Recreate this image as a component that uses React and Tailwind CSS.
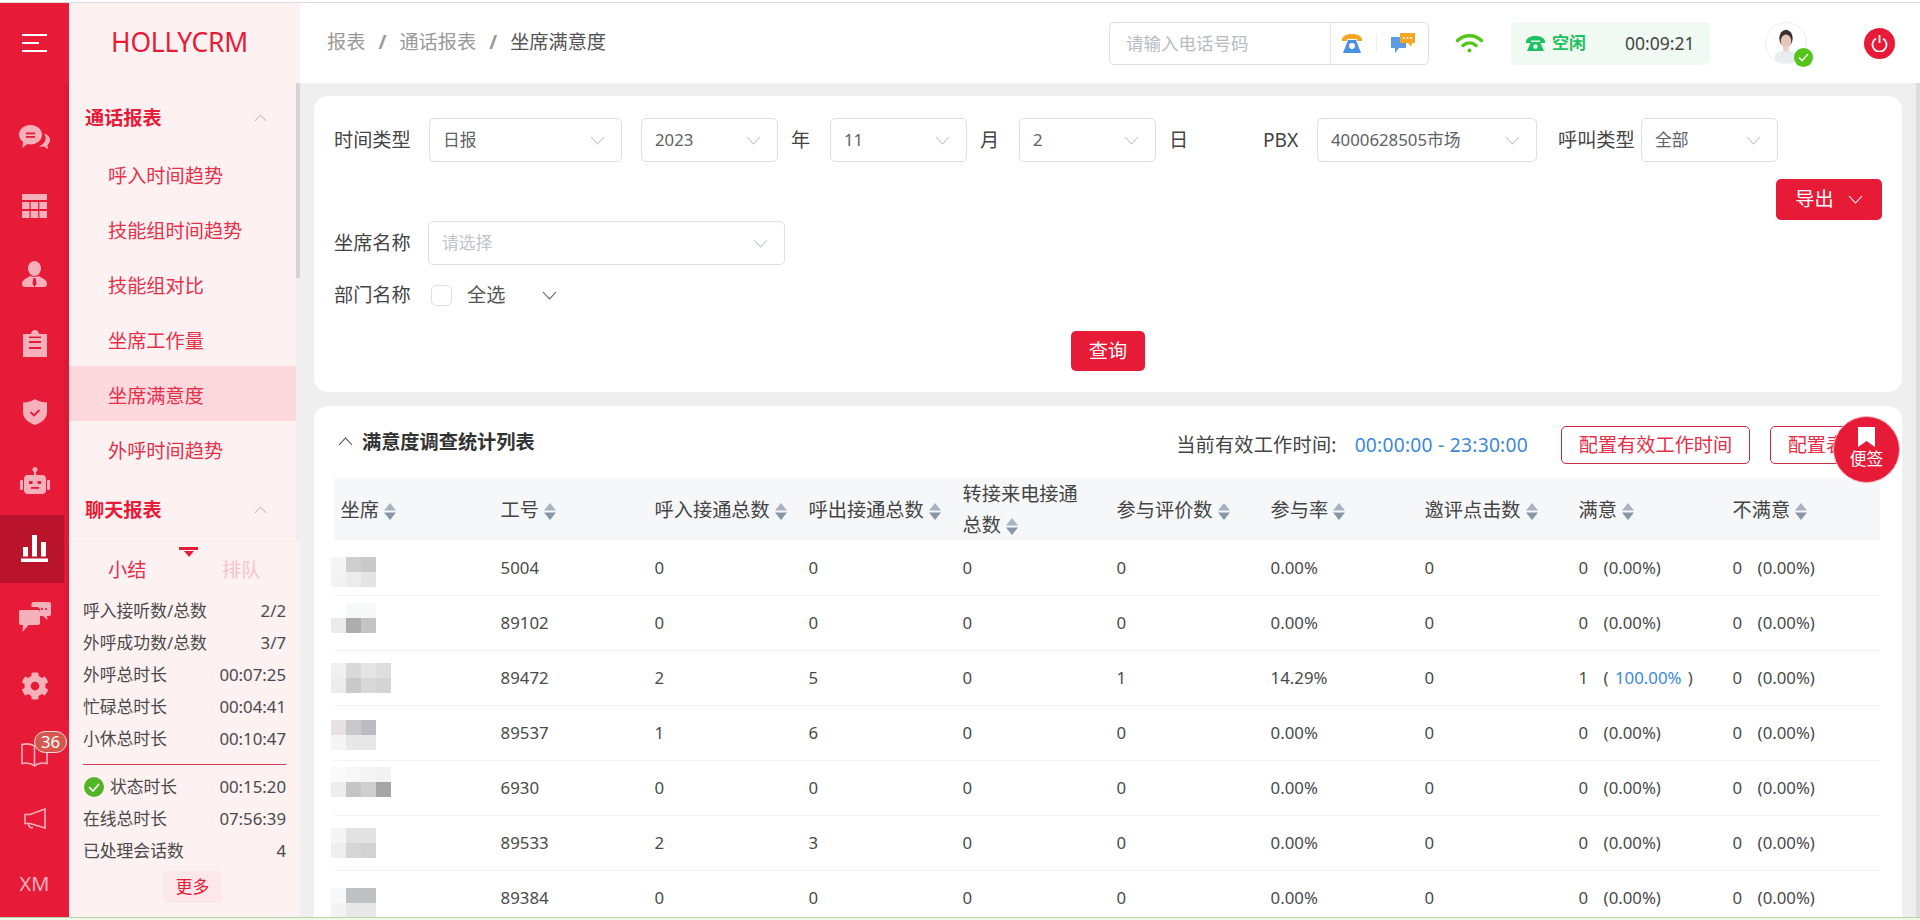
import React from "react";
import { FaCog } from "react-icons/fa";

const railColor = "#f6b0ba";

function Chevron({ className = "", color = "#c0c4cc", dir = "down" }) {
  return (
    <svg viewBox="0 0 15 9" className={className} fill="none">
      <polyline
        points={dir === "down" ? "1,1 7.5,8 14,1" : "1,8 7.5,1 14,8"}
        stroke={color}
        strokeWidth="1.1"
      />
    </svg>
  );
}

function Caret() {
  return (
    <svg viewBox="0 0 12 17" className="inline-block w-[12px] h-[17px] ml-[5px] align-[-3px]">
      <path d="M6 0L12 7.5H0z" fill="#a9b3bf" />
      <path d="M6 17L0 9.5H12z" fill="#8797a8" />
    </svg>
  );
}

const IconChat = () => (
  <svg viewBox="0 0 31 25" className="w-[31px] h-[25px]" fill={railColor}>
    <path d="M24.5 8.5c3.8.8 6.5 3.4 6.5 6.6 0 2-1 3.700-2.600 4.900l.9 4.300-4.500-2.700c-1.500.2-3.200.1-4.600-.4 3.900-1.500 6.500-4.800 6.500-8.600 0-1.500-.8-2.900-2.200-4.100z" />
    <path d="M11.500 0C17.800 0 23 4.300 23 9.700S17.800 19.400 11.500 19.400c-1 0-2-.1-3-.3L3.400 23l.7-6C1.600 15.200 0 12.600 0 9.700 0 4.300 5.200 0 11.500 0z" />
    <rect x="7" y="7.500" width="9" height="1.800" fill="#e71a37" />
    <rect x="7" y="11" width="9" height="1.800" fill="#e71a37" />
  </svg>
);
const IconTable = () => (
  <svg viewBox="0 0 25 24" className="w-[25px] h-[24px]" fill={railColor}>
    <rect width="25" height="6" />
    <rect y="8" width="7.500" height="7" /><rect x="8.700" y="8" width="7.500" height="7" /><rect x="17.400" y="8" width="7.600" height="7" />
    <rect y="17" width="7.500" height="7" /><rect x="8.700" y="17" width="7.500" height="7" /><rect x="17.400" y="17" width="7.600" height="7" />
  </svg>
);
const IconPerson = () => (
  <svg viewBox="0 0 25 26" className="w-[25px] h-[26px]" fill={railColor}>
    <ellipse cx="12.500" cy="7.500" rx="6.500" ry="7.500" />
    <path d="M8 15c1.200 1 7.800 1 9 0 3.500 2.500 8 3.500 8 8 0 2-1.500 3-3 3H3c-1.500 0-3-1-3-3 0-4.500 4.500-5.500 8-8z" />
    <path d="M11.300 17h2.400l.8 6-2 3-2-3z" fill="#e71a37" />
  </svg>
);
const IconClip = () => (
  <svg viewBox="0 0 24 27" className="w-[24px] h-[27px]" fill={railColor}>
    <path d="M0 4h8c0-2.300 1.800-4 4-4s4 1.700 4 4h8v23H0z" />
    <rect x="6" y="11" width="12" height="2" fill="#e71a37" />
    <rect x="6" y="17" width="12" height="2" fill="#e71a37" />
    <rect x="6" y="6.500" width="12" height="1.500" fill="#e71a37" />
  </svg>
);
const IconShield = () => (
  <svg viewBox="0 0 24 26" className="w-[24px] h-[26px]" fill={railColor}>
    <path d="M12 0c3 2.200 7.500 3.300 12 3.500V13c0 6.300-5 10.500-12 13C5 23.500 0 19.300 0 13V3.500C4.500 3.300 9 2.200 12 0z" />
    <polyline points="7.500,13 11,16.500 16.500,11" fill="none" stroke="#e71a37" strokeWidth="1.800" />
  </svg>
);
const IconRobot = () => (
  <svg viewBox="0 0 30 27" className="w-[30px] h-[27px]" fill={railColor}>
    <circle cx="15" cy="2.500" r="2.500" />
    <rect x="14" y="3" width="2" height="5" />
    <rect x="4" y="8" width="22" height="19" rx="4" />
    <rect y="13" width="3" height="10" rx="1" />
    <rect x="27" y="13" width="3" height="10" rx="1" />
    <rect x="9" y="14" width="3.500" height="3" fill="#e71a37" />
    <rect x="17.500" y="14" width="3.500" height="3" fill="#e71a37" />
    <rect x="11" y="20" width="8" height="1.800" fill="#e71a37" />
  </svg>
);
const IconBars = () => (
  <svg viewBox="0 0 27 27" className="w-[27px] h-[27px]" fill="#fff">
    <rect x="2" y="12" width="5" height="9.500" />
    <rect x="11" y="0" width="5" height="21.500" />
    <rect x="20" y="7" width="5" height="14.500" />
    <rect y="23.500" width="27" height="3.500" />
  </svg>
);
const IconChat2 = () => (
  <svg viewBox="0 0 32 31" className="w-[32px] h-[31px]" fill={railColor}>
    <path d="M2 8h17c1.100 0 2 .9 2 2v11c0 1.100-.9 2-2 2H9.500L3.500 30l.5-7H2c-1.100 0-2-.9-2-2V10c0-1.100.9-2 2-2z" />
    <path d="M14 0h16c1.100 0 2 .9 2 2v10c0 1.100-.9 2-2 2h-2l.5 4-4.500-4h-3V8c0-1.600-1.400-3-3-3h-5.500V2c0-1.100.9-2 2-2z" />
    <circle cx="19" cy="7" r="1.100" fill="#e71a37" /><circle cx="23" cy="7" r="1.100" fill="#e71a37" /><circle cx="27" cy="7" r="1.100" fill="#e71a37" />
  </svg>
);
const IconBook = () => (
  <svg viewBox="0 0 27 25" className="w-[27px] h-[25px]" fill="none" stroke={railColor} strokeWidth="1.600">
    <path d="M13.500 4C10 2 5 1.500 1 2.500v19c4-1 9-.5 12.500 2.500 3.500-3 8.500-3.500 12.500-2.500v-19c-4-1-9-.5-12.500 1.500z" />
    <path d="M13.500 4v20" />
  </svg>
);
const IconMega = () => (
  <svg viewBox="0 0 22 21" className="w-[22px] h-[21px]" fill="none" stroke={railColor} strokeWidth="1.600">
    <path d="M21 1v19L6 15.500H1v-9h5z" />
    <path d="M4.500 16c0 2.500 1.500 4 4.500 3.500" />
  </svg>
);

function RailItem({ children, active, h = "h-[68.6px]" }) {
  return (
    <div className={`${h} shrink-0 flex items-center justify-center ${active ? "w-[64px] bg-[#b9142c] pl-[5px]" : "w-[69px]"}`}>
      {children}
    </div>
  );
}

function Rail() {
  return (
    <div className="relative w-[69px] shrink-0 bg-[#e71a37] flex flex-col">
      <div className="h-[80px] shrink-0 flex flex-col justify-center gap-[6px] pl-[22px] pb-[1px]">
        <div className="w-[25px] h-[2px] bg-white" />
        <div className="w-[17px] h-[2px] bg-white" />
        <div className="w-[25px] h-[2px] bg-white" />
      </div>
      <div className="absolute right-0 top-[80px] w-[5px] h-[637px] bg-[#dc1a35]" />
      <div className="relative flex flex-col pt-[20px]">
        <RailItem><IconChat /></RailItem>
        <RailItem><IconTable /></RailItem>
        <RailItem><IconPerson /></RailItem>
        <RailItem><IconClip /></RailItem>
        <RailItem><IconShield /></RailItem>
        <RailItem><IconRobot /></RailItem>
        <RailItem active><IconBars /></RailItem>
        <RailItem><IconChat2 /></RailItem>
        <RailItem><FaCog className="w-[28px] h-[28px] text-[#f6b0ba]" /></RailItem>
        <RailItem>
          <div className="relative">
            <IconBook />
            <span className="absolute left-[13px] -top-[11px] w-[33px] h-[22px] rounded-full border border-[#f8d8d8] bg-[#d5584f] text-white text-[16.8px] leading-[20px] text-center">36</span>
          </div>
        </RailItem>
        <RailItem h="h-[60px]"><IconMega /></RailItem>
        <RailItem h="h-[70px]"><span className="text-[20px] text-[#f6b0ba]">XM</span></RailItem>
      </div>
    </div>
  );
}

const menu1 = ["呼入时间趋势", "技能组时间趋势", "技能组对比", "坐席工作量", "坐席满意度", "外呼时间趋势"];
const stats1 = [
  ["呼入接听数/总数", "2/2"],
  ["外呼成功数/总数", "3/7"],
  ["外呼总时长", "00:07:25"],
  ["忙碌总时长", "00:04:41"],
  ["小休总时长", "00:10:47"],
];

function MenuHeading({ children, h }) {
  return (
    <div className={`${h} flex items-center justify-between pl-[16px] pr-[29px] pt-[4px] text-[19.2px] font-bold text-[#e71a37]`}>
      <span>{children}</span>
      <Chevron dir="up" color="#c9a0a6" className="w-[13px] h-[8px]" />
    </div>
  );
}

function StatRow({ label, value, check }) {
  return (
    <div className="h-[32px] flex items-center justify-between text-[16.8px] text-[#4a4a4a]">
      <span className="flex items-center">
        {check && (
          <svg viewBox="0 0 20 20" className="w-[20px] h-[20px] mr-[6px] ml-[1px]">
            <circle cx="10" cy="10" r="10" fill="#52b528" />
            <polyline points="5,10 9,14 15,7" fill="none" stroke="#fff" strokeWidth="1.600" />
          </svg>
        )}
        {label}
      </span>
      <span>{value}</span>
    </div>
  );
}

function Sidebar() {
  return (
    <div className="w-[231px] shrink-0 bg-[#fdf1f2] flex flex-col">
      <div className="h-[80px] shrink-0 flex items-center justify-center pr-[10px] text-[26.4px] text-[#e71a37] tracking-[-0.2px]">
        HOLLYCRM
      </div>
      <div className="h-[457px] shrink-0 flex overflow-hidden">
        <div className="w-[227px] pt-[3px]">
          <MenuHeading h="h-[60px]">通话报表</MenuHeading>
          {menu1.map((m, i) => (
            <div
              key={m}
              className={`h-[55px] flex items-center pl-[39px] pt-[6px] text-[19.2px] text-[#e5304a] ${i === 4 ? "bg-[#fdd9de]" : ""}`}
            >
              {m}
            </div>
          ))}
          <MenuHeading h="h-[64px]">聊天报表</MenuHeading>
        </div>
        <div className="w-[4px] bg-[#eeeeee]">
          <div className="h-[195px] bg-[#d9d1d3]" />
        </div>
      </div>
      <div className="flex-1 border-t border-[#f6e9ea] flex flex-col">
        <div className="flex flex-col items-center pt-[6px] pl-[8px]">
          <div className="w-[19px] h-[3px] bg-[#e71a37]" />
          <div className="mt-[1px] w-0 h-0 border-l-[5px] border-r-[5px] border-t-[6px] border-l-transparent border-r-transparent border-t-[#e71a37]" />
        </div>
        <div className="flex h-[36px] items-center pl-[39px] text-[19.2px] -mt-[5px]">
          <span className="text-[#e5304a] w-[114px]">小结</span>
          <span className="text-[#f6c3cb]">排队</span>
        </div>
        <div className="pl-[14px] pr-[14px] pt-[7px]">
          {stats1.map(([a, b]) => <StatRow key={a} label={a} value={b} />)}
          <div className="h-px bg-[#d63a55] mt-[9px] mb-[6px]" />
          <StatRow label="状态时长" value="00:15:20" check />
          <StatRow label="在线总时长" value="07:56:39" />
          <StatRow label="已处理会话数" value="4" />
          <div className="flex justify-center mt-[4px] pl-[16px]">
            <div className="w-[59px] h-[32px] rounded-[5px] bg-[#fce7ea] text-[#e71a37] text-[16.8px] flex items-center justify-center">更多</div>
          </div>
        </div>
      </div>
    </div>
  );
}

function TopBar() {
  return (
    <div className="h-[80px] shrink-0 bg-white flex items-center pl-[27px] pr-[25px]">
      <div className="flex items-center text-[19.2px] text-[#999999] -mt-[2px]">
        <span>报表</span>
        <span className="w-[34px] text-center font-bold">/</span>
        <span>通话报表</span>
        <span className="w-[34px] text-center font-bold">/</span>
        <span className="text-[#555555]">坐席满意度</span>
      </div>
      <div className="ml-auto flex items-center">
        <div className="w-[320px] h-[43px] rounded-[5px] border border-[#dcdfe6] flex items-center">
          <div className="w-[220px] pl-[16px] text-[17.5px] text-[#b8bbc2]">请输入电话号码</div>
          <div className="flex-1 h-full border-l border-[#e6e6e6] flex items-center pl-[10px]">
            <svg viewBox="0 0 22 20" className="w-[22px] h-[20px]">
              <path d="M1 6c1-3.500 5-5 10-5s9 1.500 10 5v2h-5V6H6v2H1z" fill="#f6a623" />
              <path d="M7 7h8l5 13H2z" fill="#4a90e2" />
              <circle cx="11" cy="13" r="3" fill="#fff" />
            </svg>
            <div className="w-px h-[18px] bg-[#eeeeee] mx-[13px]" />
            <svg viewBox="0 0 25 20" className="w-[25px] h-[20px]">
              <path d="M1 4h15v11H9l-4 5v-5H1z" fill="#5b9be6" />
              <path d="M10 0h15v10h-3l-1 4-3-4H10z" fill="#f6a623" />
              <circle cx="14" cy="5" r="1" fill="#fff" /><circle cx="17.500" cy="5" r="1" fill="#fff" /><circle cx="21" cy="5" r="1" fill="#fff" />
            </svg>
          </div>
        </div>
        <svg viewBox="0 0 29 20" className="w-[29px] h-[20px] ml-[26px]" fill="none" stroke="#52c41a" strokeWidth="3.500" strokeLinecap="round">
          <path d="M2.500 7.500c7-6.500 17-6.500 24 0" />
          <path d="M8 12.500c4-3.500 9-3.500 13 0" />
          <circle cx="14.500" cy="17.500" r="2" fill="#52c41a" stroke="none" />
        </svg>
        <div className="w-[199px] h-[43px] ml-[27px] rounded-[5px] bg-[#f0faf2] flex items-center pl-[15px]">
          <svg viewBox="0 0 19 15" className="w-[19px] h-[15px]">
            <path d="M0 5c1-3.500 4.500-5 9.500-5s8.500 1.500 9.500 5v2h-5V4.500H5V7H0z" fill="#1ec15f" />
            <path d="M5 6h9l4 9H1z" fill="#1ec15f" />
            <circle cx="9.500" cy="10.500" r="2.200" fill="#f0faf2" />
          </svg>
          <span className="ml-[7px] text-[17px] font-bold text-[#1ec15f] w-[73px]">空闲</span>
          <span className="text-[17.5px] text-[#444444]">00:09:21</span>
        </div>
        <div className="relative w-[42px] h-[42px] ml-[55px] rounded-full border border-[#eeeeee] bg-white">
          <svg viewBox="0 0 42 42" className="w-full h-full">
            <ellipse cx="21" cy="36" rx="12" ry="7" fill="#e6ecf2" />
            <ellipse cx="21" cy="16" rx="7" ry="9" fill="#3a3030" />
            <ellipse cx="21" cy="19" rx="5.500" ry="7" fill="#e8c4bb" />
            <rect x="18" y="24" width="6" height="6" fill="#ecd0c8" />
          </svg>
          <div className="absolute -right-[7px] -bottom-[4px] w-[19px] h-[19px] rounded-full bg-[#52c41a] flex items-center justify-center">
            <svg viewBox="0 0 12 10" className="w-[11px] h-[9px]"><polyline points="1,5 4.500,8.500 11,1" fill="none" stroke="#fff" strokeWidth="1.600" /></svg>
          </div>
        </div>
        <div className="w-[31px] h-[31px] ml-[57px] rounded-full bg-[#e71a37] flex items-center justify-center">
          <svg viewBox="0 0 17 18" className="w-[17px] h-[18px]" fill="none" stroke="#fff" strokeWidth="1.800">
            <path d="M5 4.500a7 7 0 1 0 7 0" />
            <path d="M8.500 1v8" />
          </svg>
        </div>
      </div>
    </div>
  );
}

function Select({ w, value, placeholder, h = "h-[44px]" }) {
  return (
    <div className={`${w} ${h} shrink-0 rounded-[5px] border border-[#dcdfe6] flex items-center justify-between pl-[13px] pr-[16px] text-[16.8px]`}>
      <span className={placeholder ? "text-[#c0c4cc]" : "text-[#606266]"}>{value}</span>
      <Chevron className="w-[15px] h-[9px]" />
    </div>
  );
}

const labelCls = "w-[77px] shrink-0 text-[19.2px] text-[#444444]";

function FilterCard() {
  return (
    <div className="h-[296px] rounded-[14px] bg-white pl-[20px] pr-[20px] pt-[22px] mb-[14px]">
      <div className="flex items-center h-[44px]">
        <span className={labelCls}>时间类型</span>
        <div className="ml-[18px]"><Select w="w-[193px]" value="日报" /></div>
        <div className="ml-[19px]"><Select w="w-[137px]" value="2023" /></div>
        <span className="ml-[13px] w-[20px] text-[19.2px] text-[#444444]">年</span>
        <div className="ml-[19px]"><Select w="w-[137px]" value="11" /></div>
        <span className="ml-[13px] w-[20px] text-[19.2px] text-[#444444]">月</span>
        <div className="ml-[19px]"><Select w="w-[137px]" value="2" /></div>
        <span className="ml-[13px] w-[20px] text-[19.2px] text-[#444444]">日</span>
        <span className="ml-[74px] w-[36px] text-[19.2px] text-[#444444]">PBX</span>
        <div className="ml-[18px]"><Select w="w-[220px]" value="4000628505市场" /></div>
        <span className="ml-[21px] w-[77px] shrink-0 text-[19.2px] text-[#444444]">呼叫类型</span>
        <div className="ml-[6px]"><Select w="w-[137px]" value="全部" /></div>
      </div>
      <div className="flex justify-end mt-[17px]">
        <div className="w-[106px] h-[41px] rounded-[5px] bg-[#e71a37] text-white text-[19.2px] flex items-center justify-center gap-[14px]">
          <span>导出</span>
          <Chevron color="#ffffff" className="w-[15px] h-[9px]" />
        </div>
      </div>
      <div className="flex items-center mt-px">
        <span className={labelCls}>坐席名称</span>
        <div className="ml-[17px]"><Select w="w-[357px]" value="请选择" placeholder /></div>
      </div>
      <div className="flex items-center mt-[20px] h-[21px]">
        <span className={labelCls}>部门名称</span>
        <span className="ml-[20px] w-[21px] h-[21px] rounded-[5px] border border-[#dcdfe6] bg-white" />
        <span className="ml-[15px] text-[19.2px] text-[#555555]">全选</span>
        <Chevron color="#555555" className="ml-[36px] w-[17px] h-[9px]" />
      </div>
      <div className="flex justify-center mt-[25px]">
        <div className="w-[74px] h-[40px] rounded-[5px] bg-[#e71a37] text-white text-[19.2px] flex items-center justify-center">查询</div>
      </div>
    </div>
  );
}

const headers = [
  "坐席", "工号", "呼入接通总数", "呼出接通总数", "转接来电接通总数",
  "参与评价数", "参与率", "邀评点击数", "满意", "不满意",
];

const rows = [
  { id: "5004", v: ["0", "0", "0", "0", "0.00%", "0"], s: "0", blur: "translate-y-[5px]",
    cells: ["bg-[#f5f5f5]", "bg-[#cfcfcf]", "bg-[#c9c9c9]", "bg-[#f3f3f3]", "bg-[#ececec]", "bg-[#e4e4e4]"], cols: "grid-cols-3" },
  { id: "89102", v: ["0", "0", "0", "0", "0.00%", "0"], s: "0", blur: "-translate-y-[5px]",
    cells: ["bg-white", "bg-[#f7f9f9]", "bg-[#f7f9f9]", "bg-[#ebebeb]", "bg-[#adadad]", "bg-[#c4c4c4]"], cols: "grid-cols-3" },
  { id: "89472", v: ["2", "5", "0", "1", "14.29%", "0"], s: "1", hi: true, blur: "",
    cells: ["bg-[#f0f0f0]", "bg-[#d9d9d9]", "bg-[#e5e5e5]", "bg-[#dedede]", "bg-[#ececec]", "bg-[#c9c9c9]", "bg-[#d8d8d8]", "bg-[#d4d4d4]"], cols: "grid-cols-4" },
  { id: "89537", v: ["1", "6", "0", "0", "0.00%", "0"], s: "0", blur: "translate-y-[2px]",
    cells: ["bg-[#e8e2e2]", "bg-[#c9c9cd]", "bg-[#b9bdc2]", "bg-[#f5f5f5]", "bg-[#e8e8e8]", "bg-[#e8e8e8]"], cols: "grid-cols-3" },
  { id: "6930", v: ["0", "0", "0", "0", "0.00%", "0"], s: "0", blur: "-translate-y-[6px]",
    cells: ["bg-[#fafafa]", "bg-[#f8f8f8]", "bg-[#f4f4f4]", "bg-[#f2f2f2]", "bg-[#ededed]", "bg-[#c5c5c5]", "bg-[#cfcfcf]", "bg-[#a5a5a5]"], cols: "grid-cols-4" },
  { id: "89533", v: ["2", "3", "0", "0", "0.00%", "0"], s: "0", blur: "",
    cells: ["bg-[#f5f5f5]", "bg-[#e2e2e2]", "bg-[#e2e2e2]", "bg-[#efefef]", "bg-[#d6d6d6]", "bg-[#d2d2d2]"], cols: "grid-cols-3" },
  { id: "89384", v: ["0", "0", "0", "0", "0.00%", "0"], s: "0", blur: "translate-y-[5px]",
    cells: ["bg-[#f8f8f8]", "bg-[#bfc0c1]", "bg-[#bfc0c1]", "bg-[#f3f3f3]", "bg-[#e8e8e8]", "bg-[#e8e8e8]"], cols: "grid-cols-3" },
];

function Blur({ r }) {
  return (
    <div className={`-ml-[10px] grid ${r.cols} auto-rows-[15px] w-fit ${r.blur}`}>
      {r.cells.map((c, i) => <div key={i} className={`w-[15px] h-[15px] ${c}`} />)}
    </div>
  );
}

function TableCard() {
  return (
    <div className="rounded-t-[14px] bg-white pl-[20px] pr-[20px] h-[600px]">
      <div className="h-[72px] flex items-center justify-between">
        <div className="flex items-center">
          <Chevron dir="up" color="#444444" className="ml-[4px] w-[15px] h-[9px]" />
          <span className="ml-[9px] text-[19.2px] font-bold text-[#333333]">满意度调查统计列表</span>
        </div>
        <div className="flex items-center mt-[6px] text-[19.2px]">
          <span className="text-[#444444] tracking-[0.2px]">当前有效工作时间:</span>
          <span className="ml-[18px] text-[#3d88d8] tracking-[0.26px]">00:00:00 - 23:30:00</span>
          <div className="ml-[33px] h-[38px] w-[189px] rounded-[5px] border border-[#c52b44] text-[#e5304a] flex items-center justify-center">配置有效工作时间</div>
          <div className="ml-[20px] h-[38px] w-[112px] rounded-[5px] border border-[#c52b44] text-[#e5304a] flex items-center justify-center">配置表头</div>
        </div>
      </div>
      <table className="w-[1546px] table-fixed border-collapse">
        <colgroup>
          <col className="w-[160px]" />
          {headers.slice(1).map((h) => <col key={h} className="w-[154px]" />)}
        </colgroup>
        <thead>
          <tr className="h-[62px] bg-[#f6f7f9]">
            {headers.map((h) => (
              <th key={h} className="pl-[6.6px] pr-[15px] text-left font-normal text-[19.2px] leading-[31px] text-[#444444]">
                {h}<Caret />
              </th>
            ))}
          </tr>
        </thead>
        <tbody>
          {rows.map((r) => (
            <tr key={r.id} className="h-[55px] border-b border-[#f3f3f3] text-[16.8px] text-[#4a4a4a]">
              <td className="pl-[6.6px]"><Blur r={r} /></td>
              <td className="pl-[6.6px]">{r.id}</td>
              {r.v.map((x, i) => <td key={i} className="pl-[6.6px]">{x}</td>)}
              <td className="pl-[6.6px]">
                <span className="inline-block w-[25px]">{r.s}</span>
                {r.hi ? (
                  <span>( <span className="text-[#3d88d8] mx-[2px]">100.00%</span> )</span>
                ) : (
                  <span>(0.00%)</span>
                )}
              </td>
              <td className="pl-[6.6px]">
                <span className="inline-block w-[25px]">0</span>
                <span>(0.00%)</span>
              </td>
            </tr>
          ))}
        </tbody>
      </table>
    </div>
  );
}

export default function App() {
  return (
    <div className="relative w-[1920px] h-[920px] overflow-hidden bg-white flex flex-col font-['Noto_Sans','Noto_Sans_CJK_SC',sans-serif]">
      <div className="h-[3px] shrink-0 border-b border-[#dcdcdc] bg-white" />
      <div className="h-[914px] shrink-0 flex">
        <Rail />
        <Sidebar />
        <div className="flex-1 flex flex-col min-w-0">
          <TopBar />
          <div className="flex-1 flex bg-[#efefef] overflow-hidden">
            <div className="flex-1 pl-[14px] pr-[14px] pt-[13px] min-w-0">
              <FilterCard />
              <TableCard />
            </div>
            <div className="w-[4px] shrink-0 bg-[#dddddd]" />
          </div>
        </div>
      </div>
      <div className="flex-1 border-t border-[#b5d8a0] bg-[#eff7ea]" />
      <div className="absolute left-[1833px] top-[416px] w-[67px] h-[67px] rounded-full bg-[#e71a37] border border-[#f4b5bf] flex flex-col items-center pt-[10px]">
        <svg viewBox="0 0 17 20" className="w-[17px] h-[20px]" fill="#fff"><path d="M0 0h17v20l-8.500-6L0 20z" /></svg>
        <span className="mt-[1px] text-[16.8px] leading-[22px] text-white">便签</span>
      </div>
    </div>
  );
}
